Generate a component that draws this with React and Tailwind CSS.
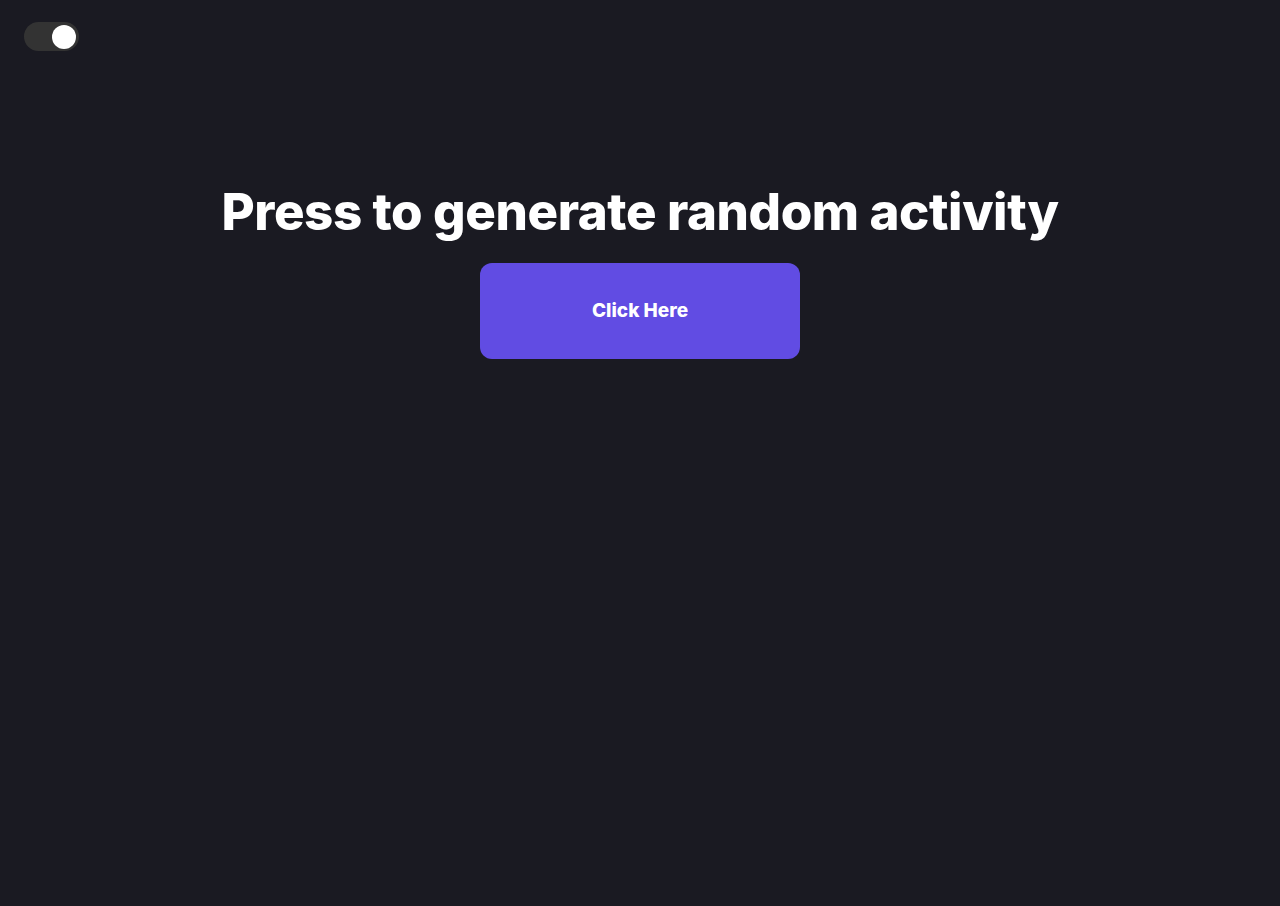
export default function App() {
  return (
    <div className="min-h-screen bg-[#1a1a22] font-['Inter','Liberation_Sans',sans-serif] text-white">
      {/* ── THEME TOGGLE ── */}
      <div className="px-6 pt-[22px]">
        <div className="w-[55px] h-[29px] rounded-full bg-[#333333] flex items-center justify-end px-[3px]">
          <span className="w-6 h-6 rounded-full bg-white" />
        </div>
      </div>

      {/* ── MAIN ── */}
      <main className="flex flex-col items-center mt-[129px]">
        <h1 className="text-[51px] font-extrabold tracking-[-0.4px] leading-[64px]">
          Press to generate random activity
        </h1>
        <button className="mt-[19px] w-[320px] h-[96px] rounded-xl bg-[#614ce3] text-[19px] font-extrabold text-white">
          Click Here
        </button>
      </main>
    </div>
  );
}
